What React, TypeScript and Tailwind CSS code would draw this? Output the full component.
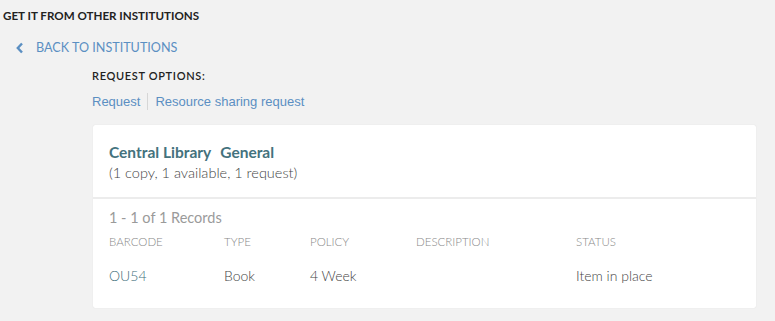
const cols = [
  { label: 'BARCODE', w: 'w-[115px]' },
  { label: 'TYPE', w: 'w-[86px]' },
  { label: 'POLICY', w: 'w-[106px]' },
  { label: 'DESCRIPTION', w: 'w-[160px]' },
  { label: 'STATUS', w: 'w-[120px]' },
]

export default function App() {
  return (
    <div className="w-[775px] h-[321px] bg-[#f2f2f2] font-['Lato',sans-serif] text-[#333] overflow-hidden">
      <h2 className="pl-[3px] pt-[8px] text-[11.6px] font-bold leading-[16px] text-[#222]">
        GET IT FROM OTHER INSTITUTIONS
      </h2>

      <button className="mt-[16px] ml-[16px] flex items-center gap-[12px] text-[#5b8fc2]">
        <svg width="8" height="12" viewBox="0 0 8 12" fill="none">
          <path d="M6 1.5 L1.8 6 L6 10.5" stroke="currentColor" strokeWidth="2.4" />
        </svg>
        <span className="text-[12.6px] leading-[16px]">BACK TO INSTITUTIONS</span>
      </button>

      <div className="ml-[92px] mt-[13px]">
        <div className="text-[11px] font-semibold tracking-[0.06em] leading-[14px] text-[#222]">
          REQUEST OPTIONS:
        </div>
        <div className="mt-[10px] flex items-center text-[13px] leading-[16px] font-['Liberation_Sans',sans-serif] text-[#5b8fc2]">
          <a>Request</a>
          <span className="mx-[7px] h-[17px] w-px bg-[#d6d6d6]" />
          <a>Resource sharing request</a>
        </div>
      </div>

      <div className="ml-[93px] mt-[15px] w-[663px] bg-white shadow-[0_0_1px_rgba(0,0,0,0.15)] rounded-[2px]">
        <div className="px-[16px] pt-[18px] pb-[16px]">
          <div className="text-[15.5px] font-bold leading-[18px] text-[#44727d]">
            Central Library<span className="ml-[9px]">General</span>
          </div>
          <div className="mt-[3px] text-[14.5px] leading-[17px] text-[#444] font-light">
            (1 copy, 1 available, 1 request)
          </div>
        </div>
        <div className="h-[2px] bg-[#ececec]" />
        <div className="px-[16px] pt-[10px] pb-[24px]">
          <div className="text-[14.5px] leading-[17px] text-[#9a9a9a]">1 - 1 of 1 Records</div>
          <div className="mt-[9px] flex text-[11.5px] leading-[14px] text-[#888] font-light">
            {cols.map((c) => (
              <div key={c.label} className={c.w}>{c.label}</div>
            ))}
          </div>
          <div className="mt-[19px] flex text-[14px] leading-[16px] text-[#444] font-light">
            <div className="w-[115px] text-[#3f6f7c]">OU54</div>
            <div className="w-[86px]">Book</div>
            <div className="w-[106px]">4 Week</div>
            <div className="w-[160px]"></div>
            <div className="w-[120px]">Item in place</div>
          </div>
        </div>
      </div>
    </div>
  )
}
